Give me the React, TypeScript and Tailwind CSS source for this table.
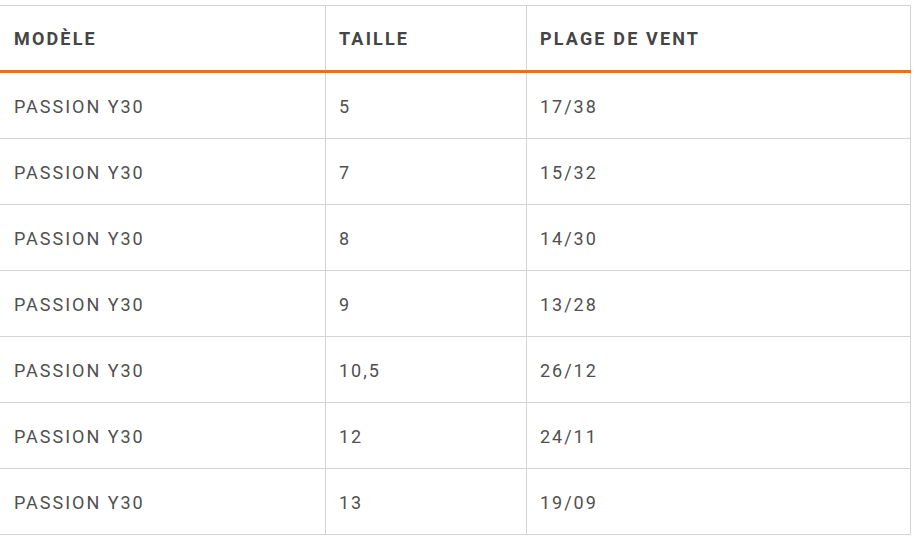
import React from "react";

const rows: [string, string, string][] = [
  ["PASSION Y30", "5", "17/38"],
  ["PASSION Y30", "7", "15/32"],
  ["PASSION Y30", "8", "14/30"],
  ["PASSION Y30", "9", "13/28"],
  ["PASSION Y30", "10,5", "26/12"],
  ["PASSION Y30", "12", "24/11"],
  ["PASSION Y30", "13", "19/09"],
];

export default function App() {
  return (
    <div className="w-[914px] h-[543px] bg-white pt-[5px]" style={{ fontFamily: "Roboto, 'Liberation Sans', sans-serif" }}>
      <div className="w-[911px] border-t border-[#d4d4d4]">
        <div className="flex h-[67px] border-b-[3px] border-[#e8711f] text-[#454545] font-bold text-[18px] tracking-[0.12em]">
          <div className="w-[326px] border-r border-[#d4d4d4] pl-[14px] flex items-center">MODÈLE</div>
          <div className="w-[201px] border-r border-[#d4d4d4] pl-[13px] flex items-center">TAILLE</div>
          <div className="w-[384px] border-r border-[#d4d4d4] pl-[13px] flex items-center">PLAGE DE VENT</div>
        </div>
        {rows.map((r, i) => (
          <div key={i} className="flex h-[66px] border-b border-[#d4d4d4] text-[#505050] text-[18px] tracking-[0.11em]">
            <div className="w-[326px] border-r border-[#d4d4d4] pl-[14px] flex items-center pt-[2px]">{r[0]}</div>
            <div className="w-[201px] border-r border-[#d4d4d4] pl-[13px] flex items-center pt-[2px]">{r[1]}</div>
            <div className="w-[384px] border-r border-[#d4d4d4] pl-[13px] flex items-center pt-[2px]">{r[2]}</div>
          </div>
        ))}
      </div>
    </div>
  );
}
